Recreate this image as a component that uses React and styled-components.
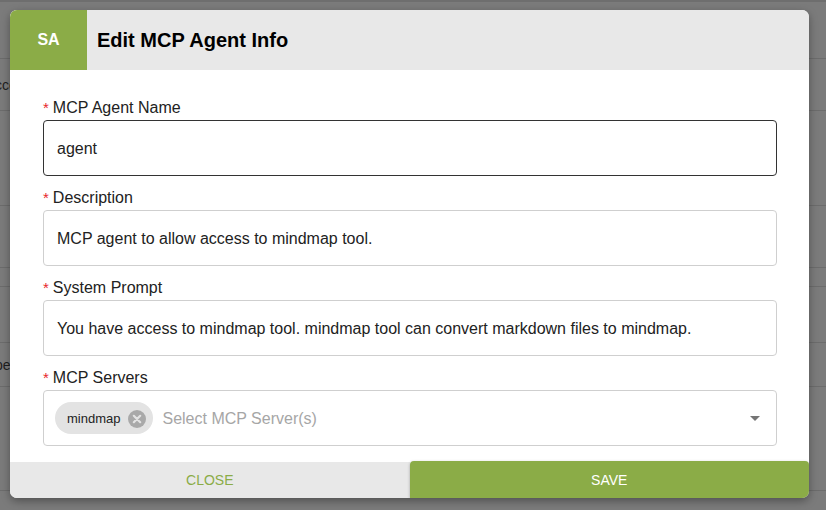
import React from "react";
import styled, { createGlobalStyle } from "styled-components";

const Global = createGlobalStyle`
  html, body { margin: 0; padding: 0; }
  body {
    width: 826px; height: 510px; overflow: hidden;
    background: #7b7b7b;
    font-family: "Liberation Sans", Arial, sans-serif;
  }
`;

const Page = styled.div`
  position: relative;
  width: 826px;
  height: 510px;
  overflow: hidden;
  background: #7b7b7b;
`;

const TopBand = styled.div`
  height: 2px;
  background: #6e6e6e;
`;

const BgRow = styled.div`
  height: ${(p) => p.$h}px;
  border-bottom: 1px solid #6c6c6c;
  box-sizing: border-box;
  display: flex;
  align-items: center;
  font-size: 14px;
  color: #1e1e1e;
`;

const BgText = styled.span`
  margin-left: -5px;
`;

const Modal = styled.div`
  position: absolute;
  left: 10px;
  top: 10px;
  width: 799px;
  height: 488px;
  background: #fff;
  border-radius: 7px;
  overflow: hidden;
  box-shadow: 0 3px 8px rgba(0, 0, 0, 0.35);
  display: flex;
  flex-direction: column;
`;

const Header = styled.div`
  height: 60px;
  display: flex;
  align-items: stretch;
  background: #e8e8e8;
`;

const Avatar = styled.div`
  width: 77px;
  background: #8bac47;
  color: #fff;
  font-weight: bold;
  font-size: 16px;
  display: flex;
  align-items: center;
  justify-content: center;
`;

const Title = styled.h2`
  margin: 0 0 0 10px;
  font-size: 20px;
  font-weight: bold;
  color: #000;
  display: flex;
  align-items: center;
`;

const Body = styled.div`
  flex: 1;
  padding: 28px 32px 0 33px;
`;

const Field = styled.div`
  margin-bottom: 12px;
`;

const Label = styled.div`
  font-size: 16px;
  line-height: 20px;
  color: #222;
  margin-bottom: 2px;
  display: flex;
  align-items: center;
`;

const Star = styled.span`
  color: #e8262b;
  font-size: 15px;
  margin-right: 4px;
`;

const InputBox = styled.div`
  height: 56px;
  box-sizing: border-box;
  border: 1px solid ${(p) => (p.$focused ? "#333" : "#cfcfcf")};
  border-radius: 4px;
  display: flex;
  align-items: center;
  padding: 2px 14px 0 13px;
  font-size: 16px;
  color: #222;
`;

const SelectBox = styled(InputBox)`
  padding: 0 16px 0 11px;
  gap: 9px;
`;

const Chip = styled.div`
  height: 32px;
  border-radius: 16px;
  background: #e3e3e3;
  display: flex;
  align-items: center;
  padding: 1px 7px 0 12px;
  box-sizing: border-box;
  gap: 8px;
  font-size: 13px;
  color: #222;
`;

const ChipX = styled.span`
  width: 18px;
  height: 18px;
  display: inline-flex;
`;

const Placeholder = styled.span`
  flex: 1;
  color: #a6a6a6;
  font-size: 16px;
  padding-top: 2px;
`;

const Arrow = styled.span`
  width: 0;
  height: 0;
  border-left: 5px solid transparent;
  border-right: 5px solid transparent;
  border-top: 5px solid #757575;
`;

const Footer = styled.div`
  height: 36px;
  display: flex;
`;

const Button = styled.button`
  flex: 1;
  border: none;
  margin: 0;
  font-family: inherit;
  font-size: 14px;
  text-transform: uppercase;
  cursor: pointer;
  background: ${(p) => (p.$primary ? "#8bac47" : "#e8e8e8")};
  color: ${(p) => (p.$primary ? "#fff" : "#8bac47")};
  border-radius: ${(p) => (p.$primary ? "4px 4px 0 0" : "0")};
  margin-top: ${(p) => (p.$primary ? "-1px" : "0")};
  height: ${(p) => (p.$primary ? "37px" : "36px")};
  box-shadow: ${(p) => (p.$primary ? "0 1px 3px rgba(0,0,0,0.3)" : "none")};
`;

const bgRows = [
  { h: 57 },
  { h: 52, t: "cce" },
  { h: 95 },
  { h: 62 },
  { h: 19 },
  { h: 56 },
  { h: 44, t: "pe" },
  { h: 104 },
  { h: 30 },
];

function RequiredLabel({ children }) {
  return (
    <Label>
      <Star>*</Star>
      {children}
    </Label>
  );
}

export default function App() {
  return (
    <>
      <Global />
      <Page>
        <TopBand />
        {bgRows.map((r, i) => (
          <BgRow key={i} $h={r.h}>
            {r.t && <BgText>{r.t}</BgText>}
          </BgRow>
        ))}
        <Modal>
          <Header>
            <Avatar>SA</Avatar>
            <Title>Edit MCP Agent Info</Title>
          </Header>
          <Body>
            <Field>
              <RequiredLabel>MCP Agent Name</RequiredLabel>
              <InputBox $focused>agent</InputBox>
            </Field>
            <Field>
              <RequiredLabel>Description</RequiredLabel>
              <InputBox>MCP agent to allow access to mindmap tool.</InputBox>
            </Field>
            <Field>
              <RequiredLabel>System Prompt</RequiredLabel>
              <InputBox>
                You have access to mindmap tool. mindmap tool can convert markdown files to mindmap.
              </InputBox>
            </Field>
            <Field>
              <RequiredLabel>MCP Servers</RequiredLabel>
              <SelectBox>
                <Chip>
                  mindmap
                  <ChipX>
                    <svg width="18" height="18" viewBox="0 0 18 18">
                      <circle cx="9" cy="9" r="9" fill="#a9a9a9" />
                      <path d="M5.8 5.8 L12.2 12.2 M12.2 5.8 L5.8 12.2" stroke="#e3e3e3" strokeWidth="2.2" strokeLinecap="round" />
                    </svg>
                  </ChipX>
                </Chip>
                <Placeholder>Select MCP Server(s)</Placeholder>
                <Arrow />
              </SelectBox>
            </Field>
          </Body>
          <Footer>
            <Button>Close</Button>
            <Button $primary>Save</Button>
          </Footer>
        </Modal>
      </Page>
    </>
  );
}
